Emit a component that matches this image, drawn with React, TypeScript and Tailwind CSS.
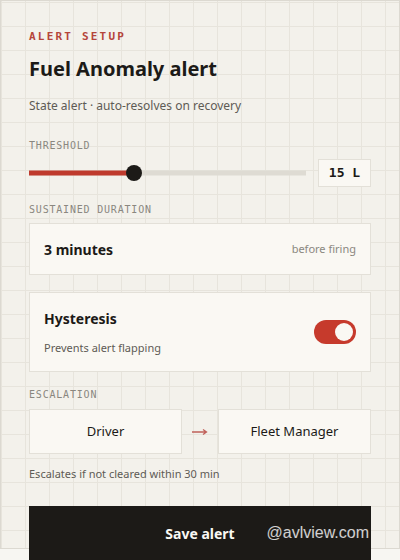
import { useState } from "react";

const mono = "font-['DejaVu_Sans_Mono',monospace]";
const sans = "font-['Noto_Sans',sans-serif]";

function FieldLabel({ children }: { children: string }) {
  return (
    <div className={`${mono} text-[10px] leading-[14px] tracking-[0.08em] text-[#8a877f]`}>
      {children}
    </div>
  );
}

function Slider({ value, max }: { value: number; max: number }) {
  const pct = (value / max) * 100;
  return (
    <div className="relative h-4 flex-1">
      <div className="absolute inset-x-0 top-1/2 h-[5px] -translate-y-1/2 bg-[#dedbd3]" />
      <div
        className="absolute left-0 top-1/2 h-[5px] -translate-y-1/2 bg-[#bf3a2d]"
        style={{ width: `${pct}%` }}
      />
      <div
        className="absolute top-1/2 h-[16px] w-[16px] -translate-x-1/2 -translate-y-1/2 rounded-full bg-[#1c1a17]"
        style={{ left: `${pct}%` }}
      />
    </div>
  );
}

function Toggle({ on, onChange }: { on: boolean; onChange: (v: boolean) => void }) {
  return (
    <button
      type="button"
      onClick={() => onChange(!on)}
      className={`flex h-[24px] w-[42px] items-center rounded-full px-[3px] ${
        on ? "justify-end bg-[#c63a2c]" : "justify-start bg-[#cfccc4]"
      }`}
    >
      <span className="h-[18px] w-[18px] rounded-full bg-[#faf8f3]" />
    </button>
  );
}

export default function App() {
  const [hysteresis, setHysteresis] = useState(true);

  return (
    <div className={`${sans} min-h-[560px] w-[400px] bg-[#f7f6f2]`}>
      <div className="h-[549px] border border-[#dcd9d1] bg-[#f3f1eb] bg-[linear-gradient(to_right,#e7e4dc_1px,transparent_1px),linear-gradient(to_bottom,#e7e4dc_1px,transparent_1px)] bg-[size:24px_24px] bg-[position:0_1px] px-[28px] pt-[28px]">
        <div className={`${mono} text-[11px] font-bold leading-4 tracking-[0.2em] text-[#b5453b]`}>
          ALERT SETUP
        </div>
        <h1 className="mt-[10px] text-[20px] font-bold leading-7 text-[#1c1a17]">
          Fuel Anomaly alert
        </h1>
        <p className="mt-[14px] text-[12px] leading-[18px] text-[#5e5b55]">
          State alert · auto-resolves on recovery
        </p>

        <div className="mt-[24px]">
          <FieldLabel>THRESHOLD</FieldLabel>
          <div className="mt-[6px] flex items-center gap-3">
            <Slider value={15} max={39.5} />
            <div
              className={`${mono} flex h-[28px] w-[53px] items-center justify-center border border-[#e3e0d8] bg-[#faf8f3] text-[13px] font-bold text-[#1c1a17]`}
            >
              15 L
            </div>
          </div>
        </div>

        <div className="mt-[16px]">
          <FieldLabel>SUSTAINED DURATION</FieldLabel>
          <div className="mt-[6px] flex h-[52px] items-center justify-between border border-[#e3e0d8] bg-[#faf8f3] px-[14px]">
            <span className="text-[14px] font-bold text-[#1c1a17]">3 minutes</span>
            <span className="text-[11px] text-[#8a877f]">before firing</span>
          </div>
        </div>

        <div className="mt-[17px] flex items-center justify-between border border-[#e3e0d8] bg-[#faf8f3] px-[14px] py-[15px]">
          <div>
            <div className="text-[14px] font-bold leading-[22px] text-[#1c1a17]">Hysteresis</div>
            <div className="mt-[10px] text-[11px] leading-4 text-[#5e5b55]">
              Prevents alert flapping
            </div>
          </div>
          <Toggle on={hysteresis} onChange={setHysteresis} />
        </div>

        <div className="mt-[16px]">
          <FieldLabel>ESCALATION</FieldLabel>
          <div className="mt-[7px] flex items-center">
            <div className="flex h-[45px] flex-1 items-center justify-center border border-[#e3e0d8] bg-[#faf8f3] text-[13px] text-[#1c1a17]">
              Driver
            </div>
            <div className="flex w-[36px] justify-center">
              <svg width="16" height="8" viewBox="0 0 16 8" fill="none">
                <path d="M0 4h14M11 1.5 14.5 4 11 6.5" stroke="#c0605a" strokeWidth="1.3" />
              </svg>
            </div>
            <div className="flex h-[45px] flex-1 items-center justify-center border border-[#e3e0d8] bg-[#faf8f3] text-[13px] text-[#1c1a17]">
              Fleet Manager
            </div>
          </div>
          <p className="mt-[12px] text-[11px] leading-4 text-[#5e5b55]">
            Escalates if not cleared within 30 min
          </p>
        </div>

        <div className="relative mt-[24px]">
          <button
            type="button"
            className="flex h-[54px] w-full items-center justify-center bg-[#1c1a17] text-[14px] font-bold text-[#faf8f3]"
          >
            Save alert
          </button>
          <span className="pointer-events-none absolute right-[2px] top-[15px] font-['Liberation_Sans',sans-serif] text-[16px] text-white/80">
            @avlview.com
          </span>
        </div>
      </div>
    </div>
  );
}
